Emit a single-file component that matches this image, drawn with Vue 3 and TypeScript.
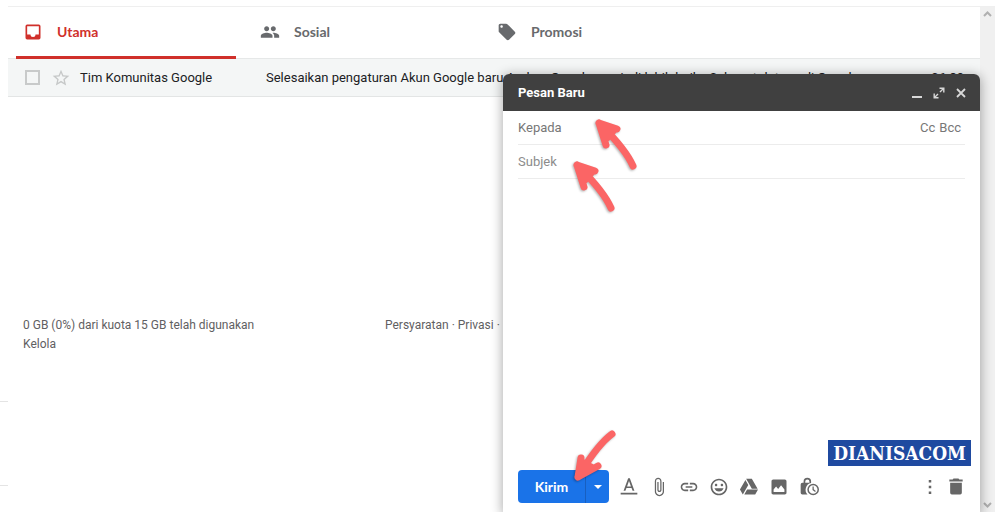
<script setup lang="ts">
import { ref } from 'vue'

interface Icon { name: string; d: string }

const tabs: Icon[] = [
  { name: 'Utama', d: 'M19 3H5a2 2 0 0 0-2 2v14a2 2 0 0 0 2 2h14a2 2 0 0 0 2-2V5a2 2 0 0 0-2-2zm0 12h-4a3 3 0 0 1-6 0H5V5h14z' },
  { name: 'Sosial', d: 'M16 11c1.66 0 2.99-1.34 2.99-3S17.66 5 16 5s-3 1.34-3 3 1.34 3 3 3zm-8 0c1.66 0 2.99-1.34 2.99-3S9.66 5 8 5 5 6.340 5 8s1.340 3 3 3zm0 2c-2.330 0-7 1.170-7 3.500V19h14v-2.500c0-2.330-4.670-3.500-7-3.500zm8 0c-.29 0-.62.02-.97.05 1.16.84 1.970 1.970 1.970 3.450V19h6v-2.500c0-2.330-4.670-3.500-7-3.500z' },
  { name: 'Promosi', d: 'M21.410 11.580l-9-9C12.050 2.220 11.550 2 11 2H4c-1.100 0-2 .9-2 2v7c0 .55.22 1.050.59 1.420l9 9c.36.36.86.58 1.410.58s1.050-.22 1.410-.59l7-7c.37-.36.59-.86.59-1.410s-.23-1.060-.59-1.420zM5.500 7C4.670 7 4 6.330 4 5.500S4.670 4 5.500 4 7 4.670 7 5.500 6.330 7 5.500 7z' },
]

const tools: Icon[] = [
  { name: 'Opsi format', d: 'M2 19h20v2H2zM5.500 16.500h2.200l1.250-3.300h6.100l1.250 3.300h2.200L13 1.500h-2zm4.150-5.200L12 4.700l2.350 6.600z' },
  { name: 'Lampirkan file', d: 'M16.500 6v11.500c0 2.210-1.790 4-4 4s-4-1.790-4-4V5c0-1.380 1.120-2.500 2.500-2.500s2.500 1.120 2.500 2.500v10.500c0 .55-.45 1-1 1s-1-.45-1-1V6H10v9.500c0 1.380 1.120 2.500 2.500 2.500s2.500-1.120 2.500-2.500V5c0-2.210-1.790-4-4-4S7 2.790 7 5v12.500c0 3.040 2.460 5.500 5.500 5.500s5.500-2.460 5.500-5.500V6h-1.500z' },
  { name: 'Sisipkan link', d: 'M3.900 12c0-1.710 1.390-3.100 3.100-3.100h4V7H7c-2.760 0-5 2.240-5 5s2.240 5 5 5h4v-1.900H7c-1.710 0-3.100-1.390-3.100-3.100zM8 13h8v-2H8v2zm9-6h-4v1.900h4c1.710 0 3.100 1.390 3.100 3.100s-1.390 3.100-3.100 3.100h-4V17h4c2.760 0 5-2.240 5-5s-2.240-5-5-5z' },
  { name: 'Sisipkan emoji', d: 'M11.990 2C6.470 2 2 6.480 2 12s4.470 10 9.990 10C17.520 22 22 17.520 22 12S17.520 2 11.990 2zM12 20c-4.420 0-8-3.580-8-8s3.580-8 8-8 8 3.580 8 8-3.580 8-8 8zm3.500-9c.83 0 1.500-.67 1.500-1.500S16.330 8 15.500 8 14 8.670 14 9.500s.67 1.500 1.500 1.500zm-7 0c.83 0 1.500-.67 1.500-1.500S9.330 8 8.500 8 7 8.670 7 9.500 7.670 11 8.500 11zM6.500 13.500c.8 2.400 2.900 4 5.500 4s4.700-1.600 5.500-4z' },
  { name: 'Sisipkan file dari Drive', d: 'M7.710 3.500L1.150 15l3.430 6 6.550-11.500zM9.730 15L6.300 21h13.120l3.430-6zM22.280 14L15.420 2H8.580l6.850 12z' },
  { name: 'Sisipkan foto', d: 'M21 19V5c0-1.100-.9-2-2-2H5c-1.100 0-2 .9-2 2v14c0 1.100.9 2 2 2h14c1.100 0 2-.9 2-2zM5.500 18v-3l3-3.500 2.500 3 3.500-4.500 4 5v3z' },
  { name: 'Mode rahasia', d: 'M14.500 7.200V5.500a4.500 4.500 0 0 0-9 0V7H4a2 2 0 0 0-2 2v10a2 2 0 0 0 2 2h6.200A8.300 8.300 0 0 1 14.500 7.200zM7.500 7V5.500a2.500 2.500 0 0 1 5 0V7zM17 8a7 7 0 1 0 0 14 7 7 0 0 0 0-14zm0 12.200a5.200 5.200 0 1 1 0-10.400 5.200 5.200 0 0 1 0 10.400zM16.200 11.500h1.500v3.300l2.500 1.900-.9 1.200-3.100-2.400z' },
]

const arrows = [
  'M633 166C629 157 620 144 603 127M599 123L617 129M599 123L606 145M599 123L614 130L607 138Z',
  'M611 208C607 199 598 186 581 169M577 165L595 171M577 165L584 187M577 165L592 172L585 180Z',
  'M612 434C601 442 591 456 581 472M578 477L581 458M578 477L598 466M578 477L582 462L593 468Z',
]

const activeTab = ref('Utama')
const selected = ref(false)
const recipient = ref('')
const subject = ref('')
const body = ref('')
</script>

<template>
  <div class="page">
    <aside class="rail" aria-hidden="true"><i></i><i></i></aside>

    <main class="inbox">
      <nav class="tabs" role="tablist">
        <button
          v-for="tab in tabs" :key="tab.name" type="button" role="tab" class="tab"
          :class="{ active: tab.name === activeTab }" :aria-selected="tab.name === activeTab"
          @click="activeTab = tab.name"
        >
          <svg viewBox="0 0 24 24"><path :d="tab.d" /></svg>
          <span>{{ tab.name }}</span>
        </button>
      </nav>

      <div class="mail">
        <input v-model="selected" type="checkbox" class="check" aria-label="Pilih">
        <button type="button" class="star" aria-label="Bintangi">
          <svg viewBox="0 0 24 24"><path d="M22 9.240l-7.190-.62L12 2 9.190 8.630 2 9.240l5.460 4.730L5.820 21 12 17.270 18.180 21l-1.630-7.030L22 9.240zM12 15.400l-3.760 2.270 1-4.280-3.320-2.880 4.380-.38L12 6.100l1.710 4.040 4.380.38-3.320 2.880 1 4.280L12 15.400z" /></svg>
        </button>
        <span class="sender">Tim Komunitas Google</span>
        <span class="title">Selesaikan pengaturan Akun Google baru Andra - Google menjadi lebih baik - Selamat datang di Google</span>
        <time class="time">06.39</time>
      </div>

      <footer class="footer">
        <div class="quota">
          <span>0 GB (0%) dari kuota 15 GB telah digunakan</span>
          <a href="#kelola">Kelola</a>
        </div>
        <div class="policies"><a href="#persyaratan">Persyaratan</a> · <a href="#privasi">Privasi</a> · <a href="#kebijakan">Kebijakan Program</a></div>
      </footer>
    </main>

    <div class="scrollbar" aria-hidden="true">
      <svg viewBox="0 0 15 15"><path d="M4 9l3.500-3.500L11 9" /></svg>
      <svg viewBox="0 0 15 15"><path d="M4 6l3.500 3.500L11 6" /></svg>
    </div>

    <form class="compose" @submit.prevent>
      <header class="compose-head">
        <h2>Pesan Baru</h2>
        <button type="button" aria-label="Minimalkan"><svg viewBox="0 0 14 14"><path d="M2 11h10" stroke-width="2" /></svg></button>
        <button type="button" aria-label="Layar penuh"><svg viewBox="0 0 14 14"><path d="M8 6l3.500-3.500M6 8l-3.500 3.500M7.500 2.200h4.300v4.300M2.200 7.500v4.300h4.300" stroke-width="1.400" /></svg></button>
        <button type="button" aria-label="Tutup"><svg viewBox="0 0 14 14"><path d="M3 3l8 8M11 3l-8 8" stroke-width="1.800" /></svg></button>
      </header>
      <div class="field">
        <input v-model="recipient" type="text" placeholder="Kepada" aria-label="Kepada">
        <button type="button">Cc</button>
        <button type="button">Bcc</button>
      </div>
      <div class="field">
        <input v-model="subject" type="text" class="subject" placeholder="Subjek" aria-label="Subjek">
      </div>
      <textarea v-model="body" aria-label="Isi pesan"></textarea>
      <div class="brand"><span>DIANISACOM</span></div>
      <div class="toolbar">
        <div class="send">
          <button type="submit">Kirim</button>
          <button type="button" class="more" aria-label="Opsi pengiriman"><svg viewBox="0 0 8 4"><path d="M0 0h8L4 4z" /></svg></button>
        </div>
        <button v-for="tool in tools" :key="tool.name" type="button" class="tool" :aria-label="tool.name">
          <svg viewBox="0 0 24 24"><path :d="tool.d" /></svg>
        </button>
        <span class="spacer"></span>
        <button type="button" class="tool dots" aria-label="Opsi lainnya"><svg viewBox="0 0 24 24"><path d="M10.500 3.500h3v3h-3zM10.500 10.500h3v3h-3zM10.500 17.500h3v3h-3z" /></svg></button>
        <button type="button" class="tool" aria-label="Hapus draf"><svg viewBox="0 0 24 24"><path d="M5 19a2 2 0 0 0 2 2h10a2 2 0 0 0 2-2V7H5zM20 3h-4l-1-1.200H9L8 3H4v2.500h16z" /></svg></button>
      </div>
    </form>

    <svg class="arrows" width="1000" height="512" viewBox="0 0 1000 512" aria-hidden="true">
      <path v-for="d in arrows" :key="d" :d="d" />
    </svg>
  </div>
</template>

<style>
body {
  background: #fff;
}
</style>

<style scoped>
.page {
  position: relative;
  display: flex;
  height: 100vh;
  min-height: 420px;
  box-sizing: border-box;
  padding: 6px 5px 0 0;
  overflow: hidden;
  font: 13px/20px Roboto, sans-serif;
  color: #202124;
}
button {
  padding: 0;
  border: 0;
  background: none;
  font: inherit;
  color: inherit;
  cursor: pointer;
}
svg {
  display: block;
  fill: currentColor;
}
.rail {
  display: flex;
  flex-direction: column;
  justify-content: flex-end;
  gap: 83px;
  width: 8px;
  padding-bottom: 26px;
  box-sizing: border-box;
}
.rail i {
  height: 1px;
  background: #e4e4e4;
}
.inbox {
  flex: 1;
  min-width: 0;
  border-top: 1px solid #efefef;
}
.tabs {
  display: flex;
  gap: 17px;
  padding-left: 8px;
}
.tab {
  display: flex;
  align-items: center;
  gap: 14px;
  flex: 0 0 220px;
  height: 52px;
  padding-left: 7px;
  box-sizing: border-box;
  border-bottom: 3px solid transparent;
  font: 700 14px/20px Lato, sans-serif;
  color: #686a6d;
}
.tab svg {
  width: 20px;
  height: 20px;
}
.tab.active {
  color: #d0302b;
  border-color: #d0302b;
}
.mail {
  display: flex;
  align-items: center;
  height: 37px;
  margin-top: -1px;
  padding: 0 16px;
  border-top: 1px solid #e6e8e8;
  border-bottom: 1px solid #e3e5e5;
  background: #f4f6f6;
  white-space: nowrap;
}
.tabs {
  position: relative;
  z-index: 1;
}
.check {
  appearance: none;
  width: 15px;
  height: 15px;
  margin: 0 11px 0 1px;
  box-sizing: border-box;
  border: 2px solid #c8caca;
}
.star {
  width: 20px;
  margin-right: 9px;
  color: #c6c8c8;
}
.star svg {
  width: 20px;
  height: 20px;
}
.sender {
  width: 186px;
}
.title {
  flex: 1;
  min-width: 0;
  overflow: hidden;
}
.footer {
  display: flex;
  margin-top: 219px;
  padding-left: 15px;
  font-size: 12px;
  line-height: 19px;
  color: #5f6062;
}
.quota {
  display: flex;
  flex-direction: column;
  width: 362px;
}
a {
  color: inherit;
  text-decoration: none;
}
.scrollbar {
  display: flex;
  flex-direction: column;
  justify-content: space-between;
  width: 15px;
  border-top: 1px solid #efefef;
  background: #f0f0f0;
}
.scrollbar svg {
  width: 15px;
  height: 15px;
  fill: none;
  stroke: #b0b0b0;
  stroke-width: 2;
}
.compose {
  position: absolute;
  top: 74px;
  right: 20px;
  bottom: 0;
  display: flex;
  flex-direction: column;
  width: 477px;
  border-radius: 6px 6px 0 0;
  background: #fff;
  box-shadow: 0 2px 12px 1px rgba(0, 0, 0, 0.32);
  color: #777;
}
.compose-head {
  display: flex;
  align-items: center;
  gap: 8px;
  height: 37px;
  padding: 0 12px 0 15px;
  border-radius: 6px 6px 0 0;
  background: #404040;
  color: #d8d8d8;
}
.compose-head h2 {
  flex: 1;
  margin: 0;
  font: 700 13px/20px Roboto, sans-serif;
  color: #fff;
}
.compose-head svg {
  width: 14px;
  height: 14px;
  fill: none;
  stroke: currentColor;
}
.field {
  display: flex;
  align-items: center;
  gap: 4px;
  height: 33px;
  margin: 0 15px;
  padding-right: 4px;
  border-bottom: 1px solid #ececec;
}
.field input {
  flex: 1;
  min-width: 0;
  padding: 0;
  border: 0;
  outline: 0;
  background: none;
  font: inherit;
  color: #222;
}
.field input::placeholder {
  color: #777;
  opacity: 1;
}
.field .subject::placeholder {
  color: #8c8c8c;
}
textarea {
  flex: 1;
  min-height: 0;
  margin: 0 15px;
  padding: 8px 0;
  border: 0;
  outline: 0;
  resize: none;
  background: none;
  font: inherit;
  color: #222;
}
.brand {
  display: flex;
  justify-content: flex-end;
  padding-right: 9px;
}
.brand span {
  padding: 0 5px;
  background: #1f4aa0;
  font: 700 19px/26px "DejaVu Serif Condensed", "DejaVu Serif", serif;
  color: #fff;
}
.toolbar {
  display: flex;
  align-items: center;
  gap: 10px;
  padding: 4px 14px 9px 15px;
  color: #666;
}
.send {
  display: flex;
  height: 33px;
  border-radius: 4px;
  background: #1a73e8;
  color: #fff;
  font: 700 14px/20px Lato, sans-serif;
}
.send button {
  width: 67px;
}
.send .more {
  display: flex;
  align-items: center;
  justify-content: center;
  width: 24px;
  border-left: 1px solid #185fc0;
}
.more svg {
  width: 8px;
  height: 4px;
}
.tool svg {
  width: 20px;
  height: 20px;
}
.spacer {
  flex: 1;
}
.dots {
  margin-right: -4px;
}
.arrows {
  position: absolute;
  top: 0;
  left: 0;
  pointer-events: none;
  fill: none;
  stroke: #fb6565;
  stroke-width: 7;
  stroke-linecap: round;
  stroke-linejoin: round;
  filter: drop-shadow(-1px 1px 1px rgba(0, 0, 0, 0.3));
}
</style>
